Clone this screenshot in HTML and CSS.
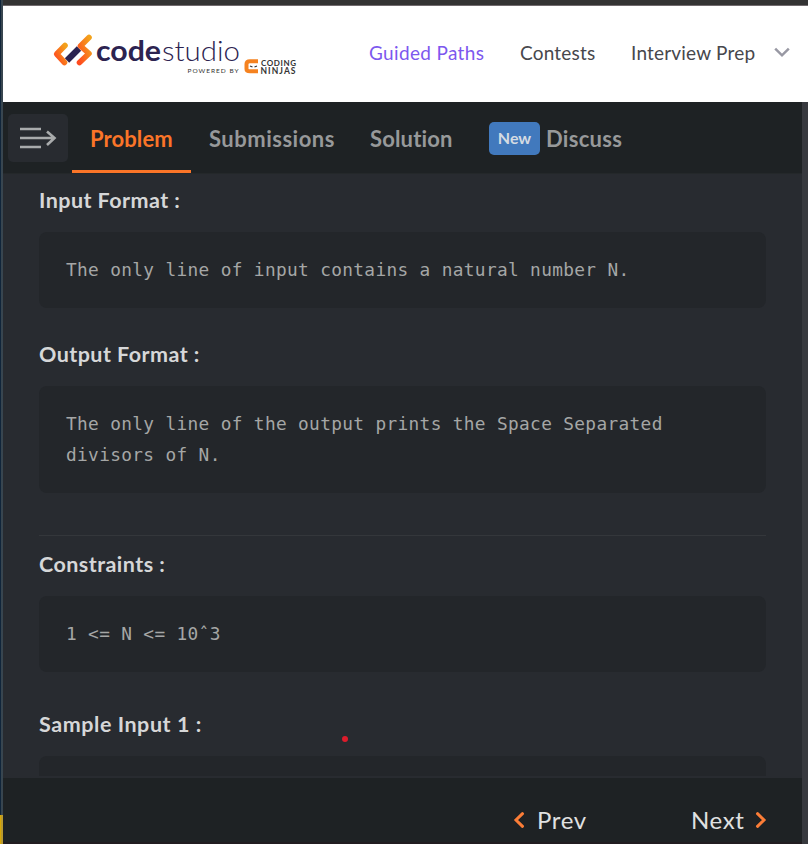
FILE: index.html
```html
<!DOCTYPE html>
<html lang="en">
<head>
<meta charset="utf-8">
<title>Code Studio</title>
<link rel="stylesheet" href="styles.css">
</head>
<body>
<div class="window">
  <div class="edge"></div>
  <div class="app">
    <header class="site-header">
      <svg class="logo" width="250" height="50" viewBox="50 30 250 50" role="img" aria-label="codestudio">
        <defs>
          <linearGradient id="orange" x1="0" y1="1" x2="1" y2="0">
            <stop offset="0" stop-color="#ff4b1f"/><stop offset="1" stop-color="#f3a21b"/>
          </linearGradient>
        </defs>
        <g fill="none" stroke-linecap="round" stroke-linejoin="round">
          <path d="M67 60.500 L79 48.500" stroke="#2c2350" stroke-width="6.200" stroke-linecap="butt"/>
          <path d="M65 45.500 L56.700 54 L64.500 62.500" stroke="url(#orange)" stroke-width="5.600"/>
          <path d="M89 37.500 L80.500 46 L89 53.500 L79.500 62.500" stroke="url(#orange)" stroke-width="5.600"/>
        </g>
        <g class="logo-text">
          <text x="96" y="61" font-size="28.500" font-weight="700" textLength="65" lengthAdjust="spacingAndGlyphs">code</text>
          <text class="thin" x="162" y="61" font-size="27" textLength="78" lengthAdjust="spacingAndGlyphs">studio</text>
          <text class="small" x="187.500" y="73.300" font-size="6.500" textLength="51">POWERED BY</text>
          <text class="small bold" x="261" y="65.500" font-size="8" textLength="35">CODING</text>
          <text class="small bold" x="260.500" y="74" font-size="8.500" textLength="35">NINJAS</text>
        </g>
        <path d="M258 61.300 H250 Q246.500 61.300 246.500 64 V69 Q246.500 71.300 250 71.300 H258" fill="none" stroke="#f58220" stroke-width="4"/>
        <rect x="249" y="64" width="9" height="5" fill="#fff"/>
        <path d="M250 66 l2.500 1 M257 66 l-2.500 1" stroke="#333" stroke-width="1.200"/>
      </svg>
      <nav class="site-nav">
        <a class="nav-guided">Guided Paths</a>
        <a class="nav-contests">Contests</a>
        <a class="nav-prep">Interview Prep</a>
        <svg class="chevron" width="16" height="11" viewBox="0 0 16 11"><path d="M1.200 1.700 L8 8.300 L14.800 1.700" fill="none" stroke="#9898a3" stroke-width="2.500"/></svg>
      </nav>
    </header>
    <div class="workspace">
      <main class="panel">
        <div class="tabs">
          <button class="menu" aria-label="Open list">
            <svg width="60" height="48" viewBox="0 0 60 48"><path d="M12 15 H33 M12 24 H46 M12 33 H33 M39 17.500 L46.500 24 L39 31" fill="none" stroke="#a9abac" stroke-width="2.600"/></svg>
          </button>
          <a class="tab tab-problem active">Problem</a>
          <a class="tab tab-submissions">Submissions</a>
          <a class="tab tab-solution">Solution</a>
          <a class="tab tab-discuss"><span class="badge">New</span>Discuss</a>
        </div>
        <section class="content">
          <h2 class="h-input">Input Format :</h2>
          <pre>The only line of input contains a natural number N.</pre>
          <h2 class="h-output">Output Format :</h2>
          <pre>The only line of the output prints the Space Separated
divisors of N.</pre>
          <hr>
          <h2 class="h-constraints">Constraints :</h2>
          <pre>1 &lt;= N &lt;= 10ˆ3</pre>
          <h2 class="h-sample">Sample Input 1 :</h2>
          <pre class="clipped"></pre>
          <span class="pointer"></span>
        </section>
        <footer class="pager">
          <a class="prev"><svg width="12" height="16" viewBox="0 0 12 16"><path d="M9.500 1.700 L3 8 L9.500 14.300"/></svg><span>Prev</span></a>
          <a class="next"><span>Next</span><svg width="12" height="16" viewBox="0 0 12 16"><path d="M2.500 1.700 L9 8 L2.500 14.300"/></svg></a>
        </footer>
      </main>
      <div class="gutter"></div>
    </div>
  </div>
</div>
</body>
</html>
```
FILE: styles.css
```css
* { box-sizing: border-box; }
body { margin: 0; font-family: Lato, "Open Sans", sans-serif; font-variant-ligatures: none; }
.window { display: flex; width: 808px; height: 844px; overflow: hidden; }
.edge {
  width: 3px; flex: none;
  background: linear-gradient(90deg, transparent 1px, rgba(130,130,120,.35) 1px), linear-gradient(#10253a 815px, #d8a705 815px);
}
.app { flex: 1; display: flex; flex-direction: column; min-width: 0; }
.site-header {
  height: 102px; flex: none; border-top: 5px solid #333; background: #fff;
  box-shadow: inset 0 1px #706a6d;
  display: flex; align-items: flex-start; padding: 25px 0 0 47px;
}
.logo { flex: none; }
.logo-text { font-family: Lato, sans-serif; fill: #2c2350; }
.logo-text .thin { font-weight: 300; }
.logo-text .small { fill: #333; }
.logo-text .bold { font-weight: 700; }
.site-nav {
  display: flex; align-items: flex-start; padding: 10px 0 0 69px;
  font-size: 19px; line-height: 26px; color: #47474c; white-space: nowrap;
}
.site-nav a { flex: none; }
.nav-guided { width: 151px; color: #7c58ee; letter-spacing: .35px; }
.nav-contests { width: 111px; letter-spacing: .2px; }
.nav-prep { width: 143px; letter-spacing: .2px; }
.chevron { margin-top: 7px; }
.workspace { flex: 1; display: flex; min-height: 0; }
.gutter { width: 6px; background: #37393e; }
.panel { flex: 1; display: flex; flex-direction: column; min-width: 0; background: #282b30; }
.tabs {
  height: 72px; flex: none; display: flex; background: #1e2224;
  border-bottom: 1px solid #24282a; padding: 0 5px;
}
.menu { width: 60px; height: 48px; margin: 12px 4px 0 0; padding: 0; border: 0; border-radius: 5px; background: #282b30; }
.menu svg { display: block; }
.tab {
  height: 71px; padding: 5px 18px 0; display: flex; align-items: center;
  color: #97999a; font-size: 22px; font-weight: 700; white-space: nowrap;
  border-bottom: 3px solid transparent;
}
.tab.active { color: #fb7528; border-color: #fb7528; }
.tab-problem { width: 119px; letter-spacing: .1px; }
.tab-submissions { width: 161px; letter-spacing: .5px; }
.tab-solution { width: 119px; letter-spacing: .15px; }
.tab-discuss { letter-spacing: .3px; }
.badge {
  width: 51px; height: 33px; margin-right: 6px; border-radius: 5px; letter-spacing: 0;
  background: #4179bd; color: #d4dbe2; font-size: 16px; line-height: 32px; text-align: center;
}
.content { flex: 1; position: relative; overflow: hidden; padding: 10px 36px 0; min-height: 0; }
h2 { margin: 0; height: 33px; font-size: 21.500px; line-height: 32px; letter-spacing: .45px; color: #d6d7d8; white-space: nowrap; }
pre {
  margin: 15px 0 30px; padding: 22px 27px 23px; border-radius: 8px; background: #23262a;
  font-family: "DejaVu Sans Mono", monospace; font-size: 17.800px; letter-spacing: .345px; line-height: 31px;
  color: #a5a6a6;
}
hr { margin: 42px 0 12px; border: 0; height: 1px; background: #34373b; }
.h-sample { margin-top: 36px; letter-spacing: .55px; }
.clipped { height: 20px; margin-bottom: 0; padding: 0; border-radius: 8px 8px 0 0; }
.pointer { position: absolute; left: 339px; top: 562px; width: 6px; height: 6px; border-radius: 50%; background: #dd1c2b; }
.pager {
  height: 66px; flex: none; background: #1e2224; border-bottom: 2px solid #211c20;
  display: flex; align-items: flex-start; justify-content: flex-end; padding: 25px 35px 0 0;
  color: #e0e1e1; font-size: 24px; line-height: 33px;
}
.pager a { display: flex; align-items: center; letter-spacing: .6px; }
.pager svg { fill: none; stroke: #fb7d37; stroke-width: 3; stroke-linecap: round; }
.prev { width: 178px; gap: 12px; }
.next { width: 76px; justify-content: space-between; }
```
